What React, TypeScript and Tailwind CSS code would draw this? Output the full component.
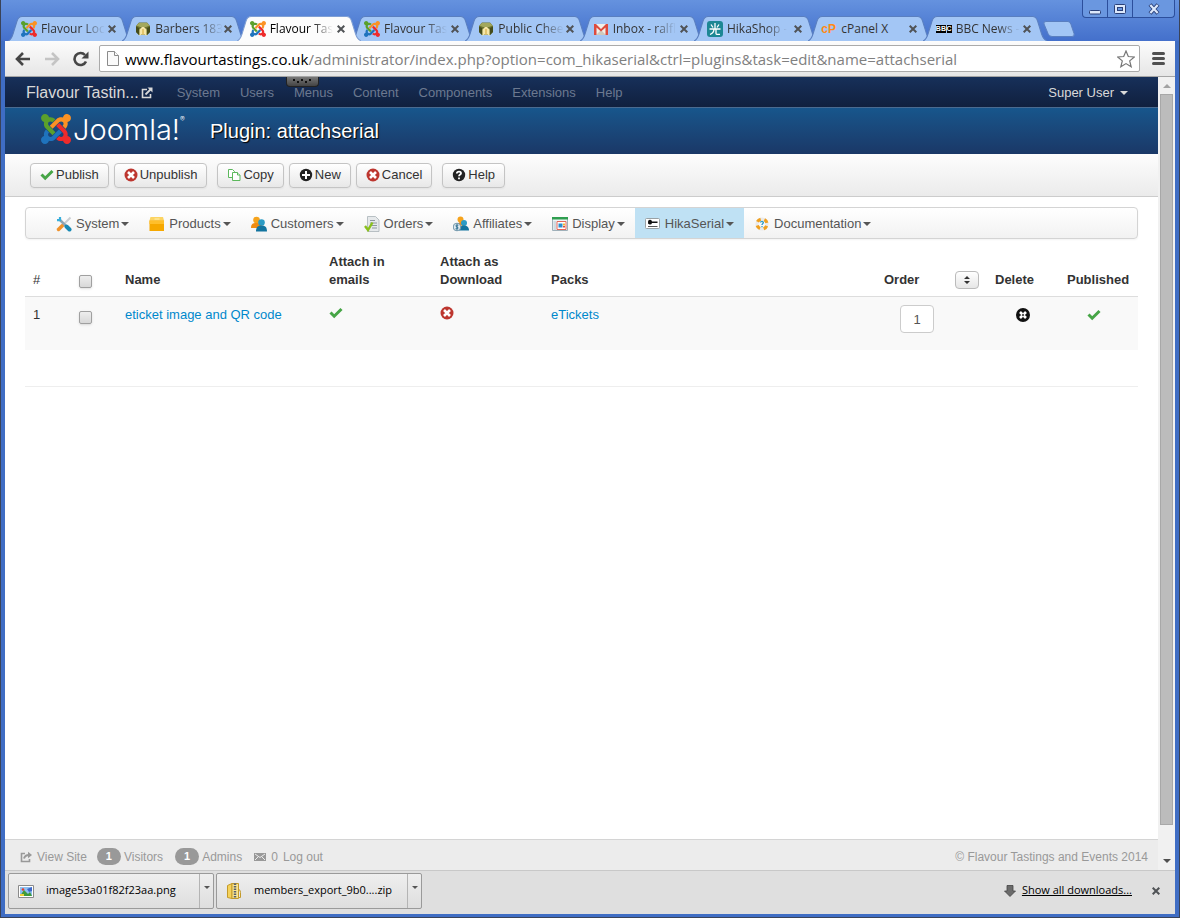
import React from 'react';

const JoomlaIcon = ({ className }: { className?: string }) => (
  <svg viewBox="0 32 448 448" className={className} aria-hidden="true">
    <path fill="#5aa02c" d="M.6 92.1C.6 58.8 27.4 32 60.4 32c30 0 54.5 21.9 59.2 50.2 32.6-7.6 67.1.6 96.5 30l-44.3 44.3c-20.5-20.5-42.6-16.3-55.4-3.5-14.3 14.3-14.3 37.9 0 52.2l99.5 99.5-44 44.3c-87.7-87.2-49.7-49.7-99.8-99.7-26.8-26.5-35-64.8-24.8-98.9C20.4 144.6.6 120.7.6 92.1z" />
    <path fill="#fb9224" d="M130.1 208.5l44.3 44.3c10-10 89.7-89.7 99.7-99.8 14.3-14.3 37.6-14.3 51.9 0 12.8 12.8 17 35-3.5 55.4l44 44.3c31.2-31.2 38.5-67.6 28.9-101.2 29.2-4.1 51.9-29.2 51.9-59.5 0-33.2-26.8-60.1-59.8-60.1-30.3 0-55.4 22.5-59.5 51.6-33.8-9.9-71.7-1.5-98.3 25.1-18.3 19.1-71.1 71.5-99.6 99.9z" />
    <path fill="#ee2b2b" d="M396.4 360.7c8.2-32.7-.9-68.5-26.3-93.9-11.8-12.2 5 4.7-99.5-99.7l-44.3 44.3 99.7 99.7c14.3 14.3 14.3 37.6 0 51.9-12.8 12.8-35 17-55.4-3.5l-44 44.3c27.6 30.2 68 38.8 102.7 28 5.5 27.4 29.7 48.1 58.9 48.1 33 0 59.8-26.8 59.8-60.1 0-30.2-22.5-55-51.6-59.1z" />
    <path fill="#1f73bd" d="M312.1 307.6l-44-44.3c-87 86.4-50.4 50.4-99.7 99.8-14.3 14.3-37.6 14.3-51.9 0-13.1-13.4-16.9-35.3 3.2-55.4l-44-44.3c-30.2 30.2-38 65.2-29.5 98.3-26.7 6-46.2 29.9-46.2 58.2C0 453.2 26.8 480 59.8 480c28.6 0 52.5-19.8 58.6-46.7 32.7 8.2 68.5-.6 94.2-26 32.1-32.2 12.2-12.2 99.5-99.7z" />
  </svg>
);

const BarrelIcon = () => (
  <svg viewBox="0 0 16 16" className="size-4" aria-hidden="true">
    <path fill="#6f7530" d="M1 5 4 1.500h8L15 5v6l-3 3H4l-3-3z" />
    <path fill="#a3a85c" d="M1.500 4.500 4 2h8l2.500 2.500L11 6H5z" />
    <path fill="#454c1b" d="M1 5.500 4 7v7l-3-3zM15 5.500 12 7v7l3-3z" />
    <path fill="#f6e6a8" d="M4.500 15V8.500L7 6h2l2.500 2.500V15L9.500 13.500h-3z" />
    <path fill="#e2c56e" d="M7 8h2v5.500H7z" />
  </svg>
);

const GmailIcon = () => (
  <svg viewBox="0 0 16 16" className="size-4" aria-hidden="true">
    <path fill="#f1efe9" d="M1 3h14v11H1z" />
    <path fill="#cfc9bd" d="m3 14 5-5 5 5z" />
    <path fill="#dd4b3e" d="M1 3h2l5 5 5-5h2v11h-2.500V6.500L8 10.500l-4.500-4V14H1z" />
  </svg>
);

const HikaIcon = () => (
  <svg viewBox="0 0 16 16" className="size-4" aria-hidden="true">
    <rect width="16" height="16" rx="3" fill="#1d8794" />
    <path fill="none" stroke="#fff" strokeWidth="1.300" d="M8 2v6M4 3.500 6 6.500M12 3.500 10 6.500M2.500 8h11M7 8c0 3-1.500 4.500-4 5.500M9 8v4.500c0 1 1 1 4 .8" />
  </svg>
);

const CpIcon = () => (
  <span className="block w-4 font-['Liberation_Sans',sans-serif] text-[12px] leading-4 font-bold text-[#ff8a14]">cP</span>
);

const BbcIcon = () => (
  <span className="flex w-4 justify-between font-['Liberation_Sans',sans-serif] text-[7px] leading-[8px] font-bold text-white">
    <b className="bg-black">B</b>
    <b className="bg-black">B</b>
    <b className="bg-black">C</b>
  </span>
);

const Joomla16 = () => <JoomlaIcon className="size-4" />;

const tabs = [
  { title: 'Flavour Loc', Icon: Joomla16 },
  { title: 'Barbers 183', Icon: BarrelIcon },
  { title: 'Flavour Tas', Icon: Joomla16, active: true },
  { title: 'Flavour Tas', Icon: Joomla16 },
  { title: 'Public Chee', Icon: BarrelIcon },
  { title: 'Inbox - ralfl', Icon: GmailIcon },
  { title: 'HikaShop -', Icon: HikaIcon },
  { title: 'cPanel X', Icon: CpIcon, short: true },
  { title: 'BBC News -', Icon: BbcIcon },
];

const Check = () => (
  <svg viewBox="0 0 14 14" className="size-[14px]" aria-hidden="true">
    <path fill="none" stroke="#46a546" strokeWidth="3" d="m1.500 6.500 3.700 3.700L12.500 3" />
  </svg>
);

const CrossCircle = () => (
  <svg viewBox="0 0 14 14" className="size-[14px]" aria-hidden="true">
    <circle cx="7" cy="7" r="6.500" fill="#bd362f" />
    <path stroke="#fff" strokeWidth="2.600" d="m4 4 6 6M10 4l-6 6" />
  </svg>
);

const CopyIcon = () => (
  <svg viewBox="0 0 14 14" className="size-[14px]" fill="#fff" stroke="#5cb85c" aria-hidden="true">
    <path d="M1.500 1.500h4l2 2v6h-6z" />
    <path d="M5.500 4.500h5l2.500 2.500v5.500H5.500z" />
    <path d="M10.500 4.500V7H13" />
  </svg>
);

const PlusCircle = () => (
  <svg viewBox="0 0 14 14" className="size-[14px]" aria-hidden="true">
    <circle cx="7" cy="7" r="6.200" fill="#222" />
    <path stroke="#fff" strokeWidth="2" d="M7 3v8M3 7h8" />
  </svg>
);

const HelpCircle = () => (
  <svg viewBox="0 0 14 14" className="size-[14px]" aria-hidden="true">
    <circle cx="7" cy="7" r="6.200" fill="#222" />
    <path fill="none" stroke="#fff" strokeWidth="1.800" d="M4.800 5.500C5 3 9.200 3.200 9 5.300 8.900 6.600 7 6.500 7 8.300M7 9.500v1.800" />
  </svg>
);

const DeleteCircle = () => (
  <svg viewBox="0 0 16 16" className="size-4" aria-hidden="true">
    <circle cx="8" cy="8" r="7" fill="#111" />
    <path stroke="#fff" strokeWidth="2.600" d="m5 5 6 6M11 5l-6 6" />
    <circle cx="8" cy="8" r="1.200" fill="#555" />
  </svg>
);

const toolbarGroups = [
  [
    { label: 'Publish', Icon: Check },
    { label: 'Unpublish', Icon: CrossCircle },
  ],
  [
    { label: 'Copy', Icon: CopyIcon },
    { label: 'New', Icon: PlusCircle },
    { label: 'Cancel', Icon: CrossCircle },
  ],
  [{ label: 'Help', Icon: HelpCircle }],
];

const menuItems = [
  {
    label: 'System',
    icon: (
      <>
        <path stroke="#c9ced2" strokeWidth="2" d="m14.500 1.500-8 8" />
        <path stroke="#f0922b" strokeWidth="3.500" strokeLinecap="round" d="m2.500 13.500 4-4" />
        <path stroke="#8fa5b3" strokeWidth="2.500" d="m4 4 6 6" />
        <path stroke="#1789b5" strokeWidth="4" strokeLinecap="round" d="m10.500 10.500 3 3" />
        <path fill="none" stroke="#37aedb" strokeWidth="2.200" d="M4 1v3.200H1" />
      </>
    ),
  },
  {
    label: 'Products',
    icon: (
      <>
        <path fill="#fcd462" d="M1.500 1h12.500L15 4.500H.5z" />
        <path fill="#f6a800" d="M.5 4.500h14.500V15H.5z" />
        <path fill="#ffbf2b" d="M.5 4.500h14.500V8H.5z" />
        <path stroke="#fff0b0" d="M5.500 3h5" />
      </>
    ),
  },
  {
    label: 'Customers',
    icon: (
      <>
        <circle cx="5.500" cy="4" r="3.300" fill="#f6a31c" />
        <path fill="#f08c12" d="M0 12c0-4 2-5 5.500-5S11 8 11 12z" />
        <circle cx="10.500" cy="6.500" r="3.300" fill="#2b9bc4" />
        <path fill="#12749f" d="M5 15.500c0-4.500 2-6 5.500-6s5.500 1.500 5.500 6z" />
      </>
    ),
  },
  {
    label: 'Orders',
    icon: (
      <>
        <path fill="#e6e9eb" stroke="#aab2b8" strokeWidth=".8" d="M3.500.5h8L15 4v11.500H3.500z" />
        <path stroke="#8d979f" d="M6 4.500h5M6 7h7M6 9.500h7M8 12h5" />
        <path fill="none" stroke="#8ac01c" strokeWidth="2.400" d="m1 10 3 4L8.500 6.500" />
      </>
    ),
  },
  {
    label: 'Affiliates',
    icon: (
      <>
        <circle cx="7.500" cy="3.500" r="3" fill="#f6a31c" />
        <path fill="#f08c12" d="M5 9c0-2 1-3 2.500-3s3 1 3 4z" />
        <circle cx="11" cy="7" r="3" fill="#2b9bc4" />
        <path fill="#12749f" d="M6 14.500C6 11 8 9.500 11 9.500s5 1.500 5 5z" />
        <circle cx="4" cy="11" r="3.800" fill="#dfe9ef" stroke="#6c93a8" />
        <path fill="none" stroke="#2a6d8e" d="M5.300 9.300c-3-1-3 1.500-1.300 1.700s1.700 2.500-1.400 1.700M4 8.300v5.400" />
      </>
    ),
  },
  {
    label: 'Display',
    icon: (
      <>
        <path fill="#eef3f5" stroke="#9fb0b9" d="M.5 2.500h15v12H.5z" />
        <path fill="#2f9e4f" d="M0 1h16v2.500H0z" />
        <path fill="#cfdce2" d="M1.500 5H4v9H1.500z" />
        <path fill="#fff" stroke="#e4675a" d="M5 5.500h9v8H5z" />
        <path fill="#2c8ed0" d="M6.500 7.500h4v4h-4z" />
        <path fill="#f5b52c" d="M11 7.500h2v2h-2z" />
        <path fill="#dc4b42" d="M11 10h2v1.500h-2z" />
      </>
    ),
  },
  {
    label: 'HikaSerial',
    active: true,
    icon: (
      <>
        <rect x=".5" y="2.500" width="14" height="10" rx="1" fill="#fff" stroke="#99a1a5" />
        <path fill="#111" d="M3 6a2 2 0 0 1 4-.5h5.500V7H7a2 2 0 0 1-4-1z" />
        <path stroke="#555" d="M3 10.500h9.500" />
      </>
    ),
  },
  {
    label: 'Documentation',
    icon: (
      <>
        <circle cx="8" cy="8" r="5" fill="none" stroke="#eaeaea" strokeWidth="3.200" />
        <circle cx="8" cy="8" r="5" fill="none" stroke="#f0a020" strokeWidth="3.200" strokeDasharray="4 3.854" strokeDashoffset="-1.900" />
        <path fill="none" stroke="#2f9cc8" strokeWidth="1.300" d="M6.500 6.500c.3-1.800 3.200-1.200 2.800.3C9 7.800 8 7.600 8 9M8 10v1.200" />
      </>
    ),
  },
];

const navLinks = ['System', 'Users', 'Menus', 'Content', 'Components', 'Extensions', 'Help'];

const Caret = ({ className }: { className?: string }) => (
  <svg viewBox="0 0 8 4" className={`h-1 w-2 ${className || ''}`} aria-hidden="true">
    <path fill="currentColor" d="M0 0h8L4 4z" />
  </svg>
);

const CloseX = () => (
  <svg viewBox="0 0 8 8" className="size-2" aria-hidden="true">
    <path stroke="#505356" strokeWidth="2" d="m.7.7 6.600 6.600M7.300.7.7 7.300" />
  </svg>
);

const TabStrip = () => (
  <div className="flex h-[41px] items-end pl-[3px]">
    <div className="flex w-full max-w-[1029px]">
      {tabs.map(({ title, Icon, active, short }, i) => (
        <div key={i} className={`relative h-[25px] min-w-0 flex-1 ${active ? 'z-10' : ''}`}>
          <svg viewBox="0 0 124 25" preserveAspectRatio="none" className="absolute top-0 left-0 h-[25px] w-[109%]" aria-hidden="true">
            <path
              fill={active ? '#fcfcfc' : '#a3c6f5'}
              stroke={active ? '#7f9fd4' : '#5a7fc0'}
              d="M0 25C3 24 4 21 5 18L9 5c1-3 2-4.500 5-4.500h95c3 0 4 1.500 5 4.500l4 13c1 3 2 6 6 7"
            />
          </svg>
          <div className="relative flex h-[25px] items-center justify-between pr-[5px] pl-[13px]">
            <div className="flex items-center gap-1">
              <Icon />
              <button
                className={`text-left text-[12px] leading-4 whitespace-nowrap ${short ? '' : '[mask-image:linear-gradient(to_right,black_65%,transparent)]'} ${active ? 'text-black' : 'text-[#333]'}`}
              >
                {title}
              </button>
            </div>
            <button aria-label="Close tab" className="p-px">
              <CloseX />
            </button>
          </div>
        </div>
      ))}
    </div>
    <button aria-label="New tab" className="mb-1 ml-[6px] shrink-0">
      <svg viewBox="0 0 32 16" className="h-4 w-8">
        <path fill="#a3c6f5" stroke="#5a7fc0" d="M3 .5h22q2 0 3 3l3 9q1 3-2 3H9q-3 0-4-3L1 3Q0 .5 3 .5z" />
      </svg>
    </button>
    <div className="ml-auto flex h-[18px] self-start rounded-b-sm border border-t-0 border-[#2c4f9c] bg-[#6a97e0]">
      <button aria-label="Minimize" className="flex w-[25px] items-center justify-center border-r border-[#2c4f9c]">
        <svg viewBox="0 0 12 12" className="size-3">
          <rect x=".5" y="7.500" width="11" height="3.500" rx="1" fill="#dce8fb" stroke="#2a4078" />
        </svg>
      </button>
      <button aria-label="Maximize" className="flex w-[25px] items-center justify-center border-r border-[#2c4f9c]">
        <svg viewBox="0 0 12 12" className="size-3">
          <rect x=".5" y="1.500" width="11" height="9" rx="1" fill="#dce8fb" stroke="#2a4078" />
          <rect x="3.500" y="4.500" width="5" height="3" fill="#6a97e0" stroke="#2a4078" />
        </svg>
      </button>
      <button aria-label="Close" className="flex w-[41px] items-center justify-center">
        <svg viewBox="0 0 12 12" className="size-3">
          <path stroke="#2a4078" strokeWidth="4" d="m2 1.500 8 9M10 1.500l-8 9" />
          <path stroke="#dce8fb" strokeWidth="2.200" d="m2.300 2 7.400 8M9.700 2l-7.400 8" />
        </svg>
      </button>
    </div>
  </div>
);

const AddressBar = () => (
  <div className="flex h-9 items-center border-b border-[#a5a5a5] bg-linear-to-b from-[#fcfcfc] to-[#e6e6e6] pr-[10px] pl-[10px]">
    <button aria-label="Back">
      <svg viewBox="0 0 16 16" className="size-4">
        <path fill="none" stroke="#464646" strokeWidth="2.600" d="M15 8H2M8 2 2 8l6 6" />
      </svg>
    </button>
    <button aria-label="Forward" className="ml-[13px]">
      <svg viewBox="0 0 16 16" className="size-4">
        <path fill="none" stroke="#c4c4c4" strokeWidth="2.600" d="M1 8h13M8 2l6 6-6 6" />
      </svg>
    </button>
    <button aria-label="Reload" className="ml-[13px]">
      <svg viewBox="0 0 16 16" className="size-4">
        <path fill="none" stroke="#464646" strokeWidth="2.600" d="M13 10.500A6 6 0 1 1 12 4" />
        <path fill="#464646" d="M15.500.5v7h-7z" />
      </svg>
    </button>
    <div className="ml-[10px] flex h-[27px] min-w-0 flex-1 items-center rounded-xs border border-[#aaa] bg-white pr-1 pl-[7px]">
      <svg viewBox="0 0 12 15" className="h-[15px] w-3 shrink-0" fill="#fafafa" stroke="#8b8b8b" aria-hidden="true">
        <path d="M.5.5h7l4 4v10H.5z" />
        <path d="M7.500.5v4h4" />
      </svg>
      <p className="ml-[6px] min-w-0 flex-1 overflow-hidden text-[15px] leading-6 whitespace-nowrap text-[#808080]">
        <span className="text-black">www.flavourtastings.co.uk</span>
        /administrator/index.php?option=com_hikaserial&amp;ctrl=plugins&amp;task=edit&amp;name=attachserial
      </p>
      <button aria-label="Bookmark this page">
        <svg viewBox="0 0 18 18" className="size-[18px]">
          <path fill="#fff" stroke="#777" strokeWidth="1.200" d="m9 1 2.300 5.500 6 .5-4.600 3.900 1.500 5.900L9 13.600l-5.200 3.200 1.500-5.900L.7 7l6-.5z" />
        </svg>
      </button>
    </div>
    <button aria-label="Menu" className="ml-[12px] flex w-[13px] flex-col gap-[2px]">
      <span className="h-[3px] rounded-xs bg-[#505050]" />
      <span className="h-[3px] rounded-xs bg-[#505050]" />
      <span className="h-[3px] rounded-xs bg-[#505050]" />
    </button>
  </div>
);

const checkboxClass =
  'block size-[13px] appearance-none rounded-xs border border-[#a0a0a0] bg-linear-to-b from-[#eee] to-[#d8d8d8] shadow-sm checked:bg-[#777]';

const cellClass = 'px-2 pt-[9px] pb-[7px]';

const PluginTable = () => (
  <table className="mt-[5px] w-full table-fixed border-collapse text-left text-[#333]">
    <colgroup>
      <col className="w-[46px]" />
      <col className="w-[46px]" />
      <col className="w-[204px]" />
      <col className="w-[111px]" />
      <col className="w-[111px]" />
      <col />
      <col className="w-[111px]" />
      <col className="w-[72px]" />
      <col className="w-[79px]" />
    </colgroup>
    <thead>
      <tr className="border-b border-[#ddd] align-bottom">
        <th className="px-2 pt-[9px] pb-[7px] font-normal">#</th>
        <th className="p-2">
          <input type="checkbox" aria-label="Check all" className={checkboxClass} />
        </th>
        <th className={cellClass}>Name</th>
        <th className={cellClass}>Attach in emails</th>
        <th className={cellClass}>Attach as Download</th>
        <th className={cellClass}>Packs</th>
        <th className={cellClass}>
          <div className="flex items-center justify-between">
            Order
            <button aria-label="Save order" className="flex h-[18px] w-6 items-center justify-center rounded-sm border border-[#bbb] bg-linear-to-b from-white to-[#e6e6e6]">
              <svg viewBox="0 0 6 8" className="h-2 w-[6px]">
                <path fill="#333" d="M0 3h6L3 0zM0 5h6L3 8z" />
              </svg>
            </button>
          </div>
        </th>
        <th className={cellClass}>Delete</th>
        <th className={cellClass}>Published</th>
      </tr>
    </thead>
    <tbody>
      <tr className="bg-[#f9f9f9] align-top">
        <td className={cellClass}>1</td>
        <td className="px-2 pt-[14px]">
          <input type="checkbox" aria-label="Select row 1" className={checkboxClass} />
        </td>
        <td className={cellClass}><a href="#" className="text-[#08c]">eticket image and QR code</a></td>
        <td className={cellClass}><Check /></td>
        <td className={cellClass}><CrossCircle /></td>
        <td className={cellClass}><a href="#" className="text-[#08c]">eTickets</a></td>
        <td className="px-6 pt-2 pb-[17px]">
          <input
            type="text"
            aria-label="Order"
            defaultValue="1"
            className="block h-7 w-[34px] rounded-sm border border-[#ccc] bg-white text-center text-[#555]"
          />
        </td>
        <td className="px-2 pt-[10px]">
          <button aria-label="Delete" className="mx-auto block"><DeleteCircle /></button>
        </td>
        <td className="pt-[11px] pl-7"><Check /></td>
      </tr>
    </tbody>
    <tfoot>
      <tr className="border-b border-[#eee]">
        <td colSpan={9} className="h-9" />
      </tr>
    </tfoot>
  </table>
);

const AdminPage = () => (
  <div className="flex min-w-0 flex-1 flex-col bg-white font-['Liberation_Sans',Arial,sans-serif] text-[13px] leading-[18px]">
    <nav className="relative flex h-[30px] items-center bg-linear-to-b from-[#17305a] to-[#10203e] pt-[2px] pr-[30px] pl-[21px] text-[#6c7990]">
      <div className="absolute top-0 left-[281px] flex h-[10px] w-[33px] items-center justify-center rounded-b-sm border border-t-0 border-[#222] bg-linear-to-b from-[#777] to-[#444]">
        <svg viewBox="0 0 19 5" className="h-[5px] w-[19px]" fill="#111" aria-hidden="true">
          <path d="M0 0h2v2H0zM4 2h2v2H4zM8 0h2v2H8zM12 2h2v2h-2zM16 0h2v2h-2z" />
        </svg>
      </div>
      <a href="#" className="flex items-center text-[16px] text-[#d9d9d9]">
        Flavour Tastin...
        <svg viewBox="0 0 12 12" className="ml-[2px] size-3" fill="none" stroke="currentColor" aria-hidden="true">
          <path strokeWidth="1.600" d="M6 2.500H1.500V10.500h8V7" />
          <path strokeWidth="1.800" d="m4.500 7.500 5-5" />
          <path fill="currentColor" stroke="none" d="M6.500.5h5v5z" />
        </svg>
      </a>
      <div className="ml-6 flex gap-5">
        {navLinks.map(link => <a key={link} href="#">{link}</a>)}
      </div>
      <button className="ml-auto flex items-center gap-[6px] text-[#d9d9d9]">
        Super User
        <Caret />
      </button>
    </nav>
    <header className="flex h-[47px] items-center border-t border-[#4a6b90] bg-linear-to-b from-[#17568c] to-[#1a3867] pl-9 text-white">
      <JoomlaIcon className="mb-[5px] size-[30px]" />
      <div className="mb-[3px] ml-[2px] flex w-[113px] font-['Inter',sans-serif] text-[29px] leading-8 font-light">
        Joomla!
        <sup className="top-0 text-[7px] leading-[12px]">®</sup>
      </div>
      <h1 className="ml-6 text-[20px] leading-9 [text-shadow:1px_1px_1px_#000]">Plugin: attachserial</h1>
    </header>
    <div className="flex h-[43px] items-center gap-[10px] border-b border-[#ccc] bg-linear-to-b from-[#fdfdfd] to-[#ebebeb] pl-[25px]">
      {toolbarGroups.map((group, i) => (
        <div key={i} className="flex gap-[5px]">
          {group.map(({ label, Icon }) => (
            <button
              key={label}
              className="flex h-[25px] items-center gap-[2px] rounded-sm border border-[#c4c4c4] bg-linear-to-b from-white to-[#e8e8e8] px-[9px] text-[#333] shadow-xs"
            >
              <Icon />
              {label}
            </button>
          ))}
        </div>
      ))}
    </div>
    <main className="flex-1 px-5 pt-[10px]">
      <div className="flex h-8 rounded-sm border border-[#d4d4d4] bg-linear-to-b from-white to-[#f2f2f2] pl-5 text-[#555] shadow-xs">
        {menuItems.map(({ label, icon, active }) => (
          <button key={label} className={`flex items-center px-[10px] pt-px ${active ? 'bg-[#bfe1f4]' : ''}`}>
            <svg viewBox="0 0 16 16" className="mr-1 size-4" aria-hidden="true">{icon}</svg>
            {label}
            <Caret className="ml-[2px]" />
          </button>
        ))}
      </div>
      <PluginTable />
    </main>
    <footer className="flex h-[31px] items-center border-t border-[#d4d4d4] bg-[#ececec] pt-[3px] pr-[10px] pl-[15px] text-[12px] text-[#999]">
      <a href="#" className="flex items-center gap-[5px]">
        <svg viewBox="0 0 12 12" className="size-3" fill="none" stroke="currentColor" aria-hidden="true">
          <path strokeWidth="1.600" d="M5 2.500H1.500v8h8V8" />
          <path strokeWidth="2" d="M4 7.500q1-3.500 5-3.500" />
          <path fill="currentColor" stroke="none" d="m8 .8 4 3.200-4 3.200z" />
        </svg>
        View Site
      </a>
      <span className="ml-[10px] rounded-full bg-[#999] px-[9px] text-[11px] leading-[17px] font-bold text-white">1</span>
      <span className="ml-[3px]">Visitors</span>
      <span className="ml-3 rounded-full bg-[#999] px-[9px] text-[11px] leading-[17px] font-bold text-white">1</span>
      <span className="ml-[3px]">Admins</span>
      <svg viewBox="0 0 12 8" className="ml-3 h-2 w-3" aria-hidden="true">
        <path fill="#999" d="M0 0h12v8H0z" />
        <path fill="none" stroke="#ececec" d="m1 1 5 3.500L11 1M1 7l3-3M11 7 8 4" />
      </svg>
      <span className="ml-[5px]">0</span>
      <a href="#" className="ml-[5px]">Log out</a>
      <p className="ml-auto">© Flavour Tastings and Events 2014</p>
    </footer>
  </div>
);

const Scrollbar = () => (
  <div className="flex w-[17px] flex-col items-center bg-[#f1f1f1] py-[7px]">
    <Caret className="mb-[6px] shrink-0 rotate-180 text-[#a3a3a3]" />
    <div className="w-[13px] flex-1 border border-[#a8a8a8] bg-[#bcbcbc]" />
    <Caret className="mt-[34px] shrink-0 text-[#505050]" />
  </div>
);

const DownloadItem = ({ name, icon }: { name: string; icon: React.ReactNode }) => (
  <div className="flex h-9 w-[206px] rounded-xs border border-[#9a9a9a] bg-linear-to-b from-[#efefef] to-[#dedede] text-[11px] text-black">
    <button className="flex min-w-0 flex-1 items-center pl-[9px]">
      <svg viewBox="0 0 16 16" className="size-4 shrink-0" aria-hidden="true">{icon}</svg>
      <span className="ml-[12px] whitespace-nowrap">{name}</span>
    </button>
    <button aria-label="Download options" className="flex w-[14px] justify-center border-l border-[#b4b4b4] pt-3">
      <svg viewBox="0 0 6 3" className="h-[3px] w-[6px]"><path fill="#555" d="M0 0h6L3 3z" /></svg>
    </button>
  </div>
);

const DownloadShelf = () => (
  <div className="flex h-11 items-center gap-[2px] border-t border-[#c8c8c8] bg-[#dfdfdf] pr-[15px] pb-1 pl-[3px]">
    <DownloadItem
      name="image53a01f82f23aa.png"
      icon={
        <>
          <path fill="#fff" stroke="#8a8a8a" d="M.5 2.500h15v12H.5z" />
          <path fill="#8fc0f2" d="M2 4h12v9H2z" />
          <path fill="#3f9a3b" d="m2 13 4-6 4 4 2-2 2 4z" />
          <path fill="#3f68c8" d="m9 6 5-2v4l-3 1z" />
          <circle cx="5" cy="6.500" r="1.300" fill="#e23c2c" />
          <path fill="#f0d13a" d="M2 11h4v2H2z" />
        </>
      }
    />
    <DownloadItem
      name="members_export_9b0....zip"
      icon={
        <>
          <path fill="#f5d25b" stroke="#c39a2a" d="M1.500 2.500 6 .5v15l-4.500-1z" />
          <path fill="#fae48f" stroke="#c39a2a" d="M6 .5h6.500v15H6z" />
          <path stroke="#555f6e" strokeWidth="2.500" strokeDasharray="1.500 1" d="M9 .5V15" />
          <path fill="none" stroke="#c39a2a" d="M12.500 6.500q2 0 2 3v5h-2" />
        </>
      }
    />
    <a href="#" className="ml-auto flex items-center gap-[6px] text-[11px] text-black underline">
      <svg viewBox="0 0 12 12" className="size-3" aria-hidden="true">
        <path fill="#6b6b6b" stroke="#444" strokeWidth=".8" d="M3 .5h6V6h2.500L6 11.500.5 6H3z" />
      </svg>
      Show all downloads...
    </a>
    <button aria-label="Close downloads bar" className="ml-[18px]"><CloseX /></button>
  </div>
);

const App: React.FC = () => {
  return (
    <div className="flex min-h-screen flex-col border-t-2 border-t-[#4b4f58] bg-[#3f6dc4] font-['Open_Sans','Noto_Sans',sans-serif]">
      <div className="-mt-[2px] flex flex-1 flex-col border-x border-b border-[#3a4358] bg-linear-to-b from-[#6592df] to-[#4470cb] bg-[length:100%_41px] bg-no-repeat px-1 pb-[3px]">
        <TabStrip />
        <AddressBar />
        <div className="flex flex-1">
          <AdminPage />
          <Scrollbar />
        </div>
        <DownloadShelf />
      </div>
    </div>
  );
};

export default App;
